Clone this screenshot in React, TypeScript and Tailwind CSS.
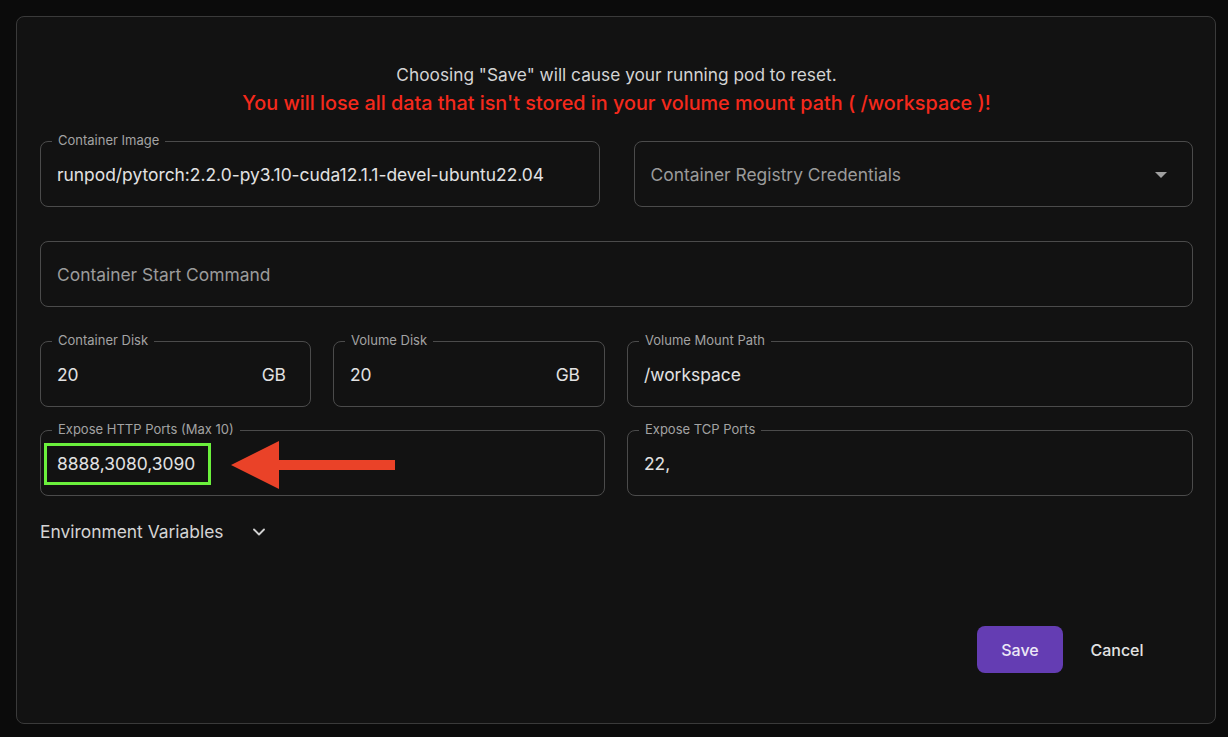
import { ChevronDown } from "lucide-react";
import type { ReactNode } from "react";

const FONT = { fontFamily: "Inter, 'Noto Sans', sans-serif" };

function Field({
  label,
  children,
  className = "",
}: {
  label?: string;
  children: ReactNode;
  className?: string;
}) {
  return (
    <div
      className={`relative flex h-[66px] items-center rounded-lg border border-[#4b4b4b] pl-[16px] pr-6 pt-[2px] ${className}`}
    >
      {label && (
        <span className="absolute -top-[10px] left-[11px] bg-[#121212] px-[6px] text-[13px] leading-4 text-[#a3a3a3]">
          {label}
        </span>
      )}
      {children}
    </div>
  );
}

function Value({ children, muted }: { children: ReactNode; muted?: boolean }) {
  return (
    <span className={`flex-1 text-[17.4px] ${muted ? "text-[#9b9b9b]" : "text-[#e2e2e2]"}`}>
      {children}
    </span>
  );
}

export default function App() {
  return (
    <div className="min-h-[737px] bg-[#0b0b0b] pt-4" style={FONT}>
      <div className="ml-4 flex h-[708px] w-[1200px] flex-col rounded-lg border border-[#3a3a3a] bg-[#121212] pl-[23px] pr-[22px] pt-[46px]">
        {/* aviso */}
        <div className="text-center">
          <p className="text-[17.3px] leading-6 text-[#d4d4d4]">
            Choosing "Save" will cause your running pod to reset.
          </p>
          <p className="mt-[2px] text-[19.8px] font-medium leading-7 text-[#f5291c]">
            You will lose all data that isn't stored in your volume mount path ( /workspace )!
          </p>
        </div>

        <div className="mt-6 grid grid-cols-2 gap-[34px]">
          <Field label="Container Image">
            <Value>runpod/pytorch:2.2.0-py3.10-cuda12.1.1-devel-ubuntu22.04</Value>
          </Field>
          <Field>
            <Value muted>Container Registry Credentials</Value>
            <svg width="12" height="6" viewBox="0 0 12 6" className="mr-[1px]">
              <path d="M0 0h12L6 6z" fill="#a0a0a0" />
            </svg>
          </Field>
        </div>

        <Field className="mt-[34px]">
          <Value muted>Container Start Command</Value>
        </Field>

        <div className="mt-[34px] grid grid-cols-[271px_272px_1fr] gap-[22px]">
          <Field label="Container Disk">
            <Value>20</Value>
            <span className="text-[17.4px] text-[#e2e2e2]">GB</span>
          </Field>
          <Field label="Volume Disk">
            <Value>20</Value>
            <span className="text-[17.4px] text-[#e2e2e2]">GB</span>
          </Field>
          <Field label="Volume Mount Path">
            <Value>/workspace</Value>
          </Field>
        </div>

        <div className="mt-[23px] grid grid-cols-[565px_1fr] gap-[22px]">
          <Field label="Expose HTTP Ports (Max 10)">
            <Value>8888,3080,3090</Value>
            {/* anotación */}
            <div className="absolute left-[3px] top-[12px] h-[42px] w-[167px] border-[3px] border-[#6bf03c]" />
            <svg
              className="absolute left-[188px] top-[8px]"
              width="168"
              height="52"
              viewBox="0 0 168 52"
            >
              <path d="M2 26L50 2V21H166V31H50V50Z" fill="#ea4228" />
            </svg>
          </Field>
          <Field label="Expose TCP Ports">
            <Value>22,</Value>
          </Field>
        </div>

        <div className="mt-6 flex items-center gap-[26px]">
          <span className="text-[17.4px] leading-6 text-[#d4d4d4]">Environment Variables</span>
          <ChevronDown size={20} strokeWidth={2.2} className="-ml-[1px] text-[#d0d0d0]" />
        </div>

        <div className="mr-[36px] mt-[82px] flex justify-end gap-[14px]">
          <button className="h-[47px] w-[86px] rounded-lg bg-[#643db3] text-[16px] font-medium text-[#ece8f6]">
            Save
          </button>
          <button className="h-[47px] w-[80px] text-[16px] font-medium text-[#e2e2e2]">
            Cancel
          </button>
        </div>
      </div>
    </div>
  );
}
